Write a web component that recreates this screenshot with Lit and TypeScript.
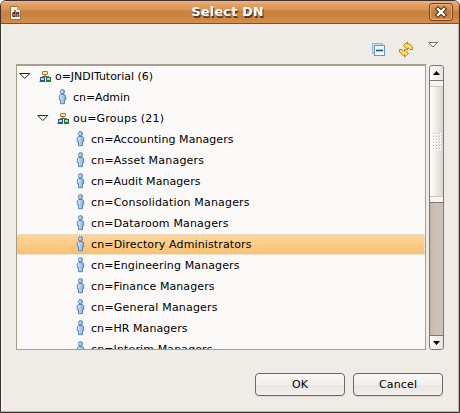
import { LitElement, html, css, svg } from "lit";
import { customElement, property } from "lit/decorators.js";
import { classMap } from "lit/directives/class-map.js";

interface Entry {
  label: string;
  depth: number;
  kind: "unit" | "person";
  selected?: boolean;
  width: number;
}

const person = (label: string, width: number, selected = false): Entry => ({
  label,
  depth: 2,
  kind: "person",
  selected,
  width,
});

const ENTRIES: Entry[] = [
  { label: "o=JNDITutorial (6)", depth: 0, kind: "unit", width: 98 },
  { label: "cn=Admin", depth: 1, kind: "person", width: 57 },
  { label: "ou=Groups (21)", depth: 1, kind: "unit", width: 91 },
  person("cn=Accounting Managers", 142.5),
  person("cn=Asset Managers", 113),
  person("cn=Audit Managers", 109.5),
  person("cn=Consolidation Managers", 158.5),
  person("cn=Dataroom Managers", 137.5),
  person("cn=Directory Administrators", 160.5, true),
  person("cn=Engineering Managers", 148.5),
  person("cn=Finance Managers", 123.5),
  person("cn=General Managers", 126.5),
  person("cn=HR Managers", 96.5),
  person("cn=Interim Managers", 121.5),
];

const personIcon = svg`
  <svg width="16" height="16" viewBox="0 0 16 16">
    <defs><linearGradient id="p" x1="0" x2="1"><stop offset="0" stop-color="#dfeaf6"/><stop offset="1" stop-color="#7fa8d6"/></linearGradient></defs>
    <path d="M5.500 5.500h4l1.200 1.200v4h-1.200v4h-4v-4h-1.200v-4z" fill="url(#p)" stroke="#5585bb"/>
    <circle cx="7.500" cy="2.700" r="2.100" fill="url(#p)" stroke="#5585bb"/>
  </svg>`;

const unitIcon = svg`
  <svg width="16" height="16" viewBox="0 0 16 16">
    <path d="M8 7v2M5.500 10v-1.500h6v1.500" fill="none" stroke="#56616b"/>
    <rect x="5.500" y="3.500" width="5" height="3" rx=".5" fill="#fbe9ae" stroke="#b5770f"/>
    <rect x="3.500" y="9.500" width="4" height="3" fill="#bcd3f5" stroke="#2a57a0"/>
    <path d="M2.500 13.500h5.500" stroke="#2a57a0"/>
    <rect x="9.500" y="9.500" width="4" height="3" fill="#a0e79a" stroke="#1f7a34"/>
    <path d="M9 13.500h5" stroke="#1f7a34"/>
  </svg>`;

@customElement("tree-row")
class TreeRow extends LitElement {
  @property({ attribute: false }) entry!: Entry;

  static styles = css`
    :host { display: block; height: 21px; }
    .row { box-sizing: border-box; height: 21px; display: flex; align-items: flex-start; padding-top: 2px; white-space: nowrap; }
    .selected {
      padding-top: 1px;
      background: linear-gradient(#ffd597, #f6c272);
      border: 1px dotted #fff3df;
      border-left: 0;
    }
    .d1 { padding-left: 18px; }
    .d2 { padding-left: 36px; }
    .twist { width: 20px; height: 16px; flex: none; }
    .icon { width: 16px; height: 16px; flex: none; margin-right: 2px; }
    .text { display: block; width: 200px; height: 18px; overflow: visible; font: 11px "DejaVu Sans", sans-serif; fill: #000; }
    svg { display: block; }
  `;

  render() {
    const { label, depth, kind, selected, width } = this.entry;
    return html`<div class=${classMap({ row: true, selected: !!selected, d1: depth === 1, d2: depth === 2 })}>
      <span class="twist">${kind === "unit"
        ? svg`<svg width="16" height="16"><path d="M2.800 5.500h10l-5 5z" fill="#fff" stroke="#25221f"/></svg>`
        : ""}</span>
      <span class="icon">${kind === "unit" ? unitIcon : personIcon}</span>
      <svg class="text"><text x="0" y="12" textLength=${width} lengthAdjust="spacing">${label}</text></svg>
    </div>`;
  }
}

@customElement("app-root")
class AppRoot extends LitElement {
  static styles = css`
    :host { display: block; width: 460px; height: 413px; overflow: hidden; font: 11px "DejaVu Sans", sans-serif; color: #000; background: #fff; }
    * { box-sizing: border-box; }
    svg { display: block; }
    .window { height: 413px; display: flex; flex-direction: column; background: #efebe7; border: 1px solid #3c3230; border-radius: 6px 6px 0 0; box-shadow: inset -1px -1px #bfb6ae, inset 1px 0 #fbf8f5; overflow: hidden; }
    .title { height: 23px; flex: none; display: grid; grid-template-columns: 34px 1fr 34px; align-items: center; border-bottom: 1px solid #80502a; background: linear-gradient(#efb583 0, #e4a264 3px, #d99350 9px, #c9813b 10px, #cb853f 15px, #d68f4a 22px); }
    .doc { margin-left: 9px; margin-top: 1px; overflow: visible; }
    .name { height: 22px; overflow: visible; width: 100%; font: bold 12.500px "DejaVu Sans", sans-serif; }
    .close { width: 24px; height: 18px; margin-left: 4px; display: grid; place-items: center; border: 1px solid #71441f; border-radius: 3px; background: linear-gradient(#dda064, #c47c38 55%, #d18b49); box-shadow: inset 0 0 0 1px #e5ae79; }
    .tools { height: 40px; flex: none; display: flex; justify-content: flex-end; gap: 11px; padding: 17px 18px 0 0; }
    .main { height: 286px; flex: none; display: flex; margin-left: 15px; }
    .tree { width: 410px; height: 286px; overflow: hidden; border: 1px solid #a79b8c; border-top: 2px solid #aa9e8f; background: #fbf9f7; }
    .bar { width: 15px; height: 285px; margin: 1px 0 0 3px; display: flex; flex-direction: column; border: 1px solid #80766d; border-radius: 3px; background: linear-gradient(90deg, #bfb4aa, #cbc1b8 4px); overflow: hidden; }
    .step { height: 14px; flex: none; display: grid; place-items: center; background: linear-gradient(90deg, #fff, #e8e3dd); }
    .thumb { height: 123px; flex: none; border-top: 1px solid #80766d; border-bottom: 1px solid #80766d; background: linear-gradient(90deg, #fff, #ddd5cd); display: flex; flex-direction: column; justify-content: space-between; }
    .cap { height: 6px; background: #f7f4f2; border-bottom: 1px solid #cbc4bc; }
    .cap.end { border-bottom: 0; border-top: 1px solid #cbc4bc; }
    .space { flex: 1; }
    .down { border-top: 1px solid #80766d; }
    .actions { flex: none; display: flex; justify-content: flex-end; gap: 8px; padding: 23px 16px 0 0; }
    .btn { width: 90px; height: 23px; border: 1px solid #716858; border-radius: 4px; display: block; padding: 0; background: linear-gradient(#f9f8f7, #f1eeeb 52%, #e9e5e1 53%, #f3f0ed); box-shadow: 0 1px #dcd7d1; font: inherit; }
    .btn svg { width: 88px; height: 21px; }
  `;

  render() {
    const arrow = "M5.500 4.500L9.500 1v2h2l3 3v2.500h-2.500l-1.500-1.500h-1v2z";
    const dots = Array.from({ length: 18 }, (_, i) => ({ x: (i % 3) * 3, y: Math.floor(i / 3) * 3 }));
    return html`<div class="window">
      <div class="title">
        <svg class="doc" width="12" height="14"><path d="M.5.5h7l3 3v10h-10z" fill="#f3f5f8" stroke="#8b7a40"/><path d="M7.500.5v3h3z" fill="#e6c772" stroke="#c19b43"/><text x="2" y="11" font-size="8" font-weight="bold" textLength="7.500" lengthAdjust="spacingAndGlyphs">dn</text></svg>
        <svg class="name"><text x="157.500" y="16.500" textLength="72" fill="#4c3b2c">Select DN</text><text x="156.500" y="15" textLength="72" fill="#fff">Select DN</text></svg>
        <div class="close"><svg width="12" height="12"><path d="M3 3l6 6M9 3l-6 6" stroke="#51331d" stroke-width="4.500" stroke-linecap="square"/><path d="M3 3l6 6M9 3l-6 6" stroke="#fff" stroke-width="2.300" stroke-linecap="square"/></svg></div>
      </div>
      <div class="tools">
        <svg width="16" height="16"><path d="M1.500 12.500v-10h10v2h-8v8z" fill="#c4dfef" stroke="#8fb8d2"/><rect x="3.500" y="4.500" width="10" height="10" fill="#edf8fe" stroke="#7396b5"/><path d="M5 9.500h7" stroke="#114b89" stroke-width="1.400"/></svg>
        <svg width="16" height="17"><path d=${arrow} fill="#fbdc6c" stroke="#b98013"/><path d=${arrow} transform="rotate(180 8 8.500)" fill="#fbdc6c" stroke="#b98013"/></svg>
        <svg width="16" height="16"><path d="M3.500 1.500h9l-4.500 4.500z" fill="#fff" stroke="#77716a"/></svg>
      </div>
      <div class="main">
        <div class="tree">${ENTRIES.map((e) => html`<tree-row .entry=${e}></tree-row>`)}</div>
        <div class="bar">
          <div class="step"><svg width="7" height="4"><path d="M0 4h7l-3.500-4z"/></svg></div>
          <div class="thumb"><div class="cap"></div><svg width="13" height="18"><g transform="translate(3 0)">${dots.map((d) => svg`<rect x=${d.x} y=${d.y} width="2" height="2" fill="#fff"/><rect x=${d.x} y=${d.y} width="1" height="1" fill="#b9b0a7"/>`)}</g></svg><div class="cap end"></div></div>
          <div class="space"></div>
          <div class="step down"><svg width="7" height="4"><path d="M0 0h7l-3.500 4z"/></svg></div>
        </div>
      </div>
      <div class="actions">
        <button class="btn"><svg><text x="36" y="14" textLength="16">OK</text></svg></button>
        <button class="btn"><svg><text x="25" y="14" textLength="38">Cancel</text></svg></button>
      </div>
    </div>`;
  }
}
